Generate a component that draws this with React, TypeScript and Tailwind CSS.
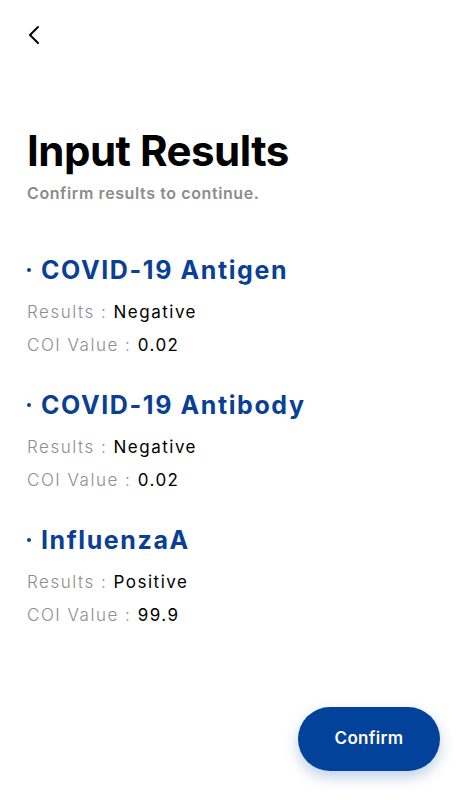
import { ChevronLeft } from "lucide-react"

const results = [
  { name: "COVID-19 Antigen", result: "Negative", coi: "0.02" },
  { name: "COVID-19 Antibody", result: "Negative", coi: "0.02" },
  { name: "InfluenzaA", result: "Positive", coi: "99.9" },
]

export default function App() {
  return (
    <div
      className="relative w-[466px] h-[800px] bg-white overflow-hidden"
      style={{ fontFamily: "Inter, 'Noto Sans', sans-serif" }}
    >
      <div className="pt-[19px] pl-[18px]">
        <ChevronLeft className="w-[32px] h-[32px] text-black" strokeWidth={1.5} />
      </div>

      <div className="px-[27px] pt-[78px]">
        <h1 className="text-[42px] leading-[44px] font-bold text-black tracking-[-0.5px]">Input Results</h1>
        <p className="mt-[8px] text-[16px] font-semibold text-[#8c8c8c] tracking-[0.6px]">
          Confirm results to continue.
        </p>

        <div className="mt-[49px] flex flex-col gap-[27px]">
          {results.map((r) => (
            <div key={r.name}>
              <div className="flex items-center gap-[10px]">
                <span className="w-[4px] h-[4px] rounded-full bg-[#0a3f96]" />
                <h2 className="text-[25px] leading-[32px] font-bold text-[#0a3f96] tracking-[1.6px]">{r.name}</h2>
              </div>
              <div className="mt-[10px] text-[17px] leading-[33px] tracking-[1.5px]">
                <p>
                  <span className="text-[#8e8e8e] font-light">Results : </span>
                  <span className="text-black">{r.result}</span>
                </p>
                <p>
                  <span className="text-[#8e8e8e] font-light">COI Value : </span>
                  <span className="text-black">{r.coi}</span>
                </p>
              </div>
            </div>
          ))}
        </div>
      </div>

      <button className="absolute left-[298px] top-[707px] w-[142px] h-[64px] rounded-full bg-[#02429a] text-white text-[17px] font-semibold tracking-[0.3px] shadow-[0_6px_14px_rgba(2,66,154,0.25)]">
        Confirm
      </button>
    </div>
  )
}
